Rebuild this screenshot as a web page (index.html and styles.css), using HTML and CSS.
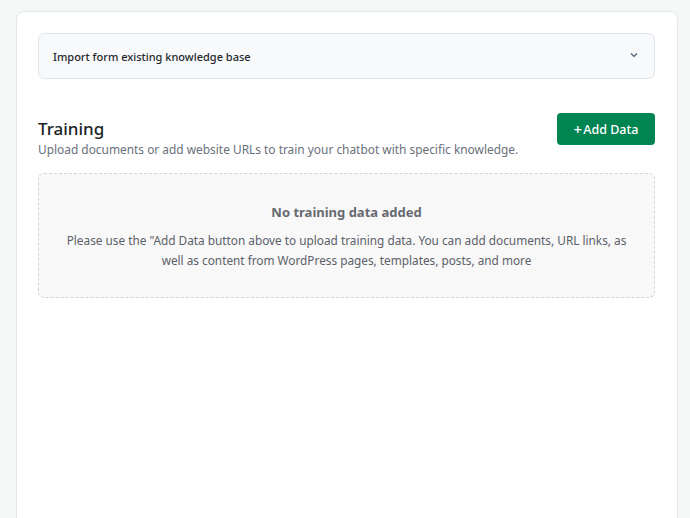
FILE: index.html
```html
<!DOCTYPE html>
<html>
<head>
<meta charset="utf-8">
<link rel="stylesheet" href="styles.css">
</head>
<body>
<div class="card">
  <div class="accordion">
    <span class="acc-title">Import form existing knowledge base</span>
    <svg class="chev" width="8" height="6" viewBox="0 0 8 6"><path d="M1 1.5 L4 4.5 L7 1.5" fill="none" stroke="#4a5a72" stroke-width="1.2"/></svg>
  </div>
  <div class="training-head">
    <div class="titles">
      <h2 class="title">Training</h2>
      <p class="subtitle">Upload documents or add website URLs to train your chatbot with specific knowledge.</p>
    </div>
    <button class="add-btn"><span class="plus">+</span>Add Data</button>
  </div>
  <div class="empty">
    <div class="empty-title">No training data added</div>
    <p class="empty-text">Please use the "Add Data button above to upload training data. You can add documents, URL links, as well as content from WordPress pages, templates, posts, and more</p>
  </div>
</div>
</body>
</html>
```
FILE: styles.css
```css
html, body { margin: 0; padding: 0; }
body {
  background: #f3f8f6;
  font-family: "Noto Sans", "Open Sans", sans-serif;
  width: 690px;
  height: 518px;
  overflow: hidden;
}
.card {
  margin: 11px 0 0 16px;
  width: 662px;
  height: 520px;
  box-sizing: border-box;
  background: #fff;
  border: 1px solid #e3e7ea;
  border-radius: 8px;
  padding: 21px 22px 0 21px;
}
.accordion {
  height: 46px;
  box-sizing: border-box;
  background: #f8f9fb;
  border: 1px solid #e2e5ea;
  border-radius: 6px;
  display: flex;
  align-items: center;
  justify-content: space-between;
  padding: 0 16px 0 14px;
}
.acc-title {
  font-size: 11px;
  font-weight: 500;
  color: #24282e;
}
.chev { display: block; margin-top: -2px; }
.training-head {
  margin-top: 34px;
  display: flex;
  justify-content: space-between;
  align-items: flex-start;
}
.title {
  margin: 5px 0 0;
  font-size: 17px;
  font-weight: 500;
  color: #1b1f24;
  line-height: 22px;
}
.subtitle {
  margin: 0;
  font-size: 11.9px;
  color: #69707a;
  line-height: 18px;
}
.add-btn {
  width: 98px;
  height: 32px;
  background: #008452;
  border: none;
  border-radius: 4px;
  color: #fff;
  font-family: inherit;
  font-size: 12.5px;
  font-weight: 500;
  display: flex;
  align-items: center;
  justify-content: center;
  padding: 0;
}
.plus { font-size: 15px; margin-right: 1px; line-height: 1; }
.empty {
  margin-top: 15px;
  height: 125px;
  box-sizing: border-box;
  background: #f8f8f8;
  border: 1px dashed #cfd6df;
  border-radius: 6px;
  text-align: center;
  padding: 28px 20px 0;
}
.empty-title {
  font-size: 13px;
  font-weight: 700;
  color: #666a70;
  line-height: 20px;
}
.empty-text {
  margin: 9px auto 0;
  font-size: 11.8px;
  color: #5c6068;
  line-height: 19.5px;
}
```
